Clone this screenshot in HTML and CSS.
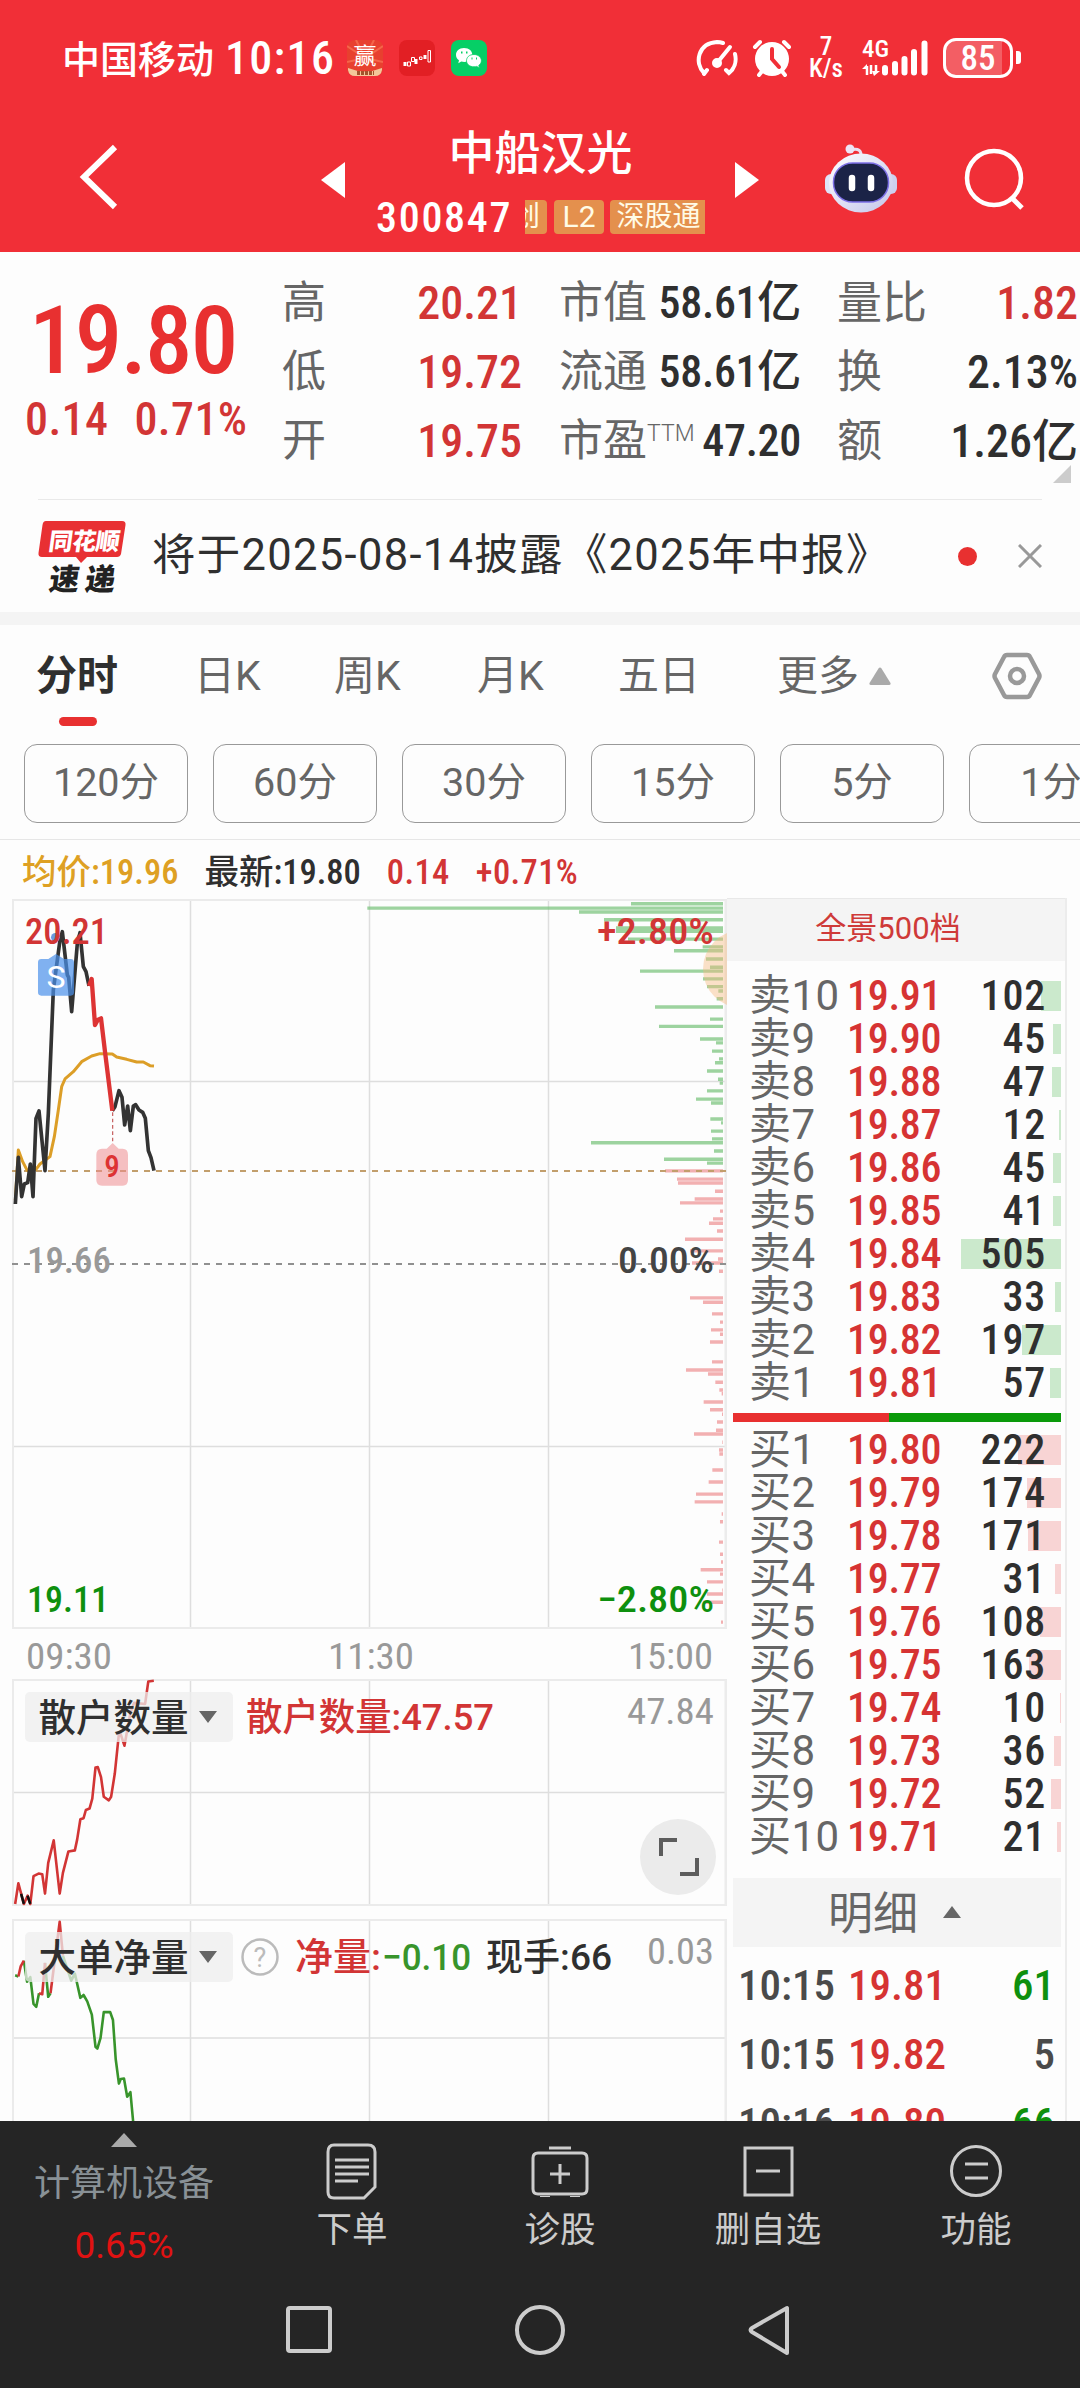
FILE: index.html
```html
<!DOCTYPE html>
<html lang="zh-CN">
<head>
<meta charset="utf-8">
<title>中船汉光 300847</title>
<link rel="stylesheet" href="styles.css">
</head>
<body>
<div class="app">
  <header class="top">
    <div class="status">
      <span class="carrier">中国移动</span>
      <span class="clock num">10:16</span>
      <svg class="app-icon" viewBox="0 0 36 36"><rect width="36" height="36" rx="8" fill="#e8402f"/><path d="M18 18 0 6M18 18 9 0M18 18 27 0M18 18 36 6M18 18 0 22M18 18 36 22" stroke="#f4654a" stroke-width="2"/><path d="M1 28Q18 35 35 28V30Q34 36 28 36H8Q2 36 1 30Z" fill="#f3c79a"/><path d="M10 33H27" stroke="#a3532c" stroke-width="4" stroke-dasharray="3 1"/><text x="18" y="24" text-anchor="middle" font-size="23" fill="#fff">赢</text></svg>
      <svg class="app-icon" viewBox="0 0 36 36"><rect width="36" height="36" rx="8" fill="#e21f24"/><path d="M6 22V26M17 19V24M26 15V19" stroke="#fff" stroke-width="3"/><path d="M8.500 22H11.500V26H8.500ZM12.500 17.500H15.500V21.500H12.500ZM20.500 17H23V19.500H20.500ZM29 10.500H31.500V22H29Z" fill="none" stroke="#fff" stroke-width="1"/></svg>
      <svg class="app-icon" viewBox="0 0 36 36"><rect width="36" height="36" rx="8" fill="#06cf66"/><path d="M13 8c-5 0-8 3-8 7 0 2 1 4 3 5.300l-.7 3 3-1.700c1 .3 2 .4 3 .4 5 0 8-3 8-7s-3-7-8.300-7Z" fill="#fff"/><path d="M23 14.500c-5 0-7.500 3-7.500 6.300s3 6 7.500 6c1 0 2-.2 2.700-.4l2.700 1.500-.6-2.600c1.600-1 2.600-2.700 2.600-4.500 0-3.300-3-6.300-7.400-6.300Z" fill="#fff" stroke="#06cf66" stroke-width=".8"/><path d="M10 12.500h1.500M15 12.500h1.500M20.500 18.500h1M25 18.500h1" stroke="#06cf66" stroke-width="2"/></svg>
      <div class="status-right">
        <svg width="42" height="38" viewBox="0 0 42 38" fill="none" stroke="#fff" stroke-width="4" stroke-linecap="round"><path d="M8 35 11 31M8 34C-2 24 2 4 21 3Q24 3 27 4M39 15C41 23 38 30 33 34L30 31"/><path d="M21 24 34 8" stroke-width="4"/><circle cx="21" cy="24" r="3" fill="#fff"/></svg>
        <svg class="alarm" width="40" height="38" viewBox="0 0 40 38"><circle cx="20" cy="20" r="17" fill="#fff"/><path d="M3 8 8 3M37 8 32 3M7 36 11 31M33 36 29 31" stroke="#fff" stroke-width="4" stroke-linecap="round"/><path d="M20 10V20L27 28" fill="none" stroke="#f12f37" stroke-width="4" stroke-linecap="round"/></svg>
        <div class="speed"><span>7</span><span>K/s</span></div>
        <svg class="signal" width="68" height="38" viewBox="0 0 68 38"><text class="svg-num" x="0" y="18" font-size="23" textLength="27" lengthAdjust="spacingAndGlyphs" fill="#fff">4G</text><path d="M5 36V27M9 26V35M14 26V34" stroke="#fff" stroke-width="2.500"/><path d="M0 30 5 25V30ZM10 32H18L12 37Z" fill="#fff"/><g stroke="#fff" stroke-width="6" stroke-linecap="round"><path d="M23 29V33.500M33 25V33.500M42.500 20V33.500M52 13V33.500M62.500 4.500V33.500"/></g></svg>
        <div class="battery"><span class="num">85</span></div>
      </div>
    </div>
    <nav class="title-bar">
      <svg class="back" width="40" height="66" viewBox="0 0 40 66"><path d="M36 3 5 33 36 63" fill="none" stroke="#fff" stroke-width="6"/></svg>
      <svg class="prev" width="24" height="36" viewBox="0 0 24 36"><path d="M0 18 24 0V36Z" fill="#fff"/></svg>
      <div class="title">
        <h1>中船汉光</h1>
        <div class="code-row"><span class="code num">300847</span><span class="tag cut"><i>创</i></span><span class="tag l2">L2</span><span class="tag link">深股通</span></div>
      </div>
      <svg class="next" width="24" height="36" viewBox="0 0 24 36"><path d="M24 18 0 0V36Z" fill="#fff"/></svg>
      <svg class="robot" width="74" height="70" viewBox="0 0 74 70">
        <defs><linearGradient id="shell" x1="0" y1="0" x2="1" y2="1"><stop offset="0" stop-color="#fff"/><stop offset="1" stop-color="#c3c5ea"/></linearGradient></defs>
        <path d="M27 7Q38 4 37 14" fill="none" stroke="#eadff2" stroke-width="3"/><circle cx="26" cy="6" r="4.500" fill="#eee4f5"/>
        <rect x="1" y="31" width="14" height="20" rx="6" fill="#dfe4f8"/><rect x="59" y="31" width="14" height="20" rx="6" fill="#cdd0ee"/>
        <ellipse cx="37" cy="40" rx="32" ry="29.500" fill="url(#shell)"/><rect x="9.500" y="20" width="55" height="39" rx="19" fill="#1b2347" stroke="#7c6fe6" stroke-width="1.500"/>
        <path d="M28 35V45M47 35V45" stroke="#fff" stroke-width="6.500" stroke-linecap="round"/>
      </svg>
      <svg class="search" width="62" height="64" viewBox="0 0 62 64" fill="none" stroke="#fff" stroke-width="4.500"><circle cx="30" cy="30" r="27"/><path d="M48 50 58 60" stroke-width="5"/></svg>
    </nav>
  </header>

  <section class="quote">
    <div class="last"><div class="price num">19.80</div><div class="change num"><span>0.14</span><span>0.71%</span></div></div>
    <dl class="c1"><div><dt>高</dt><dd class="num up">20.21</dd></div><div><dt>低</dt><dd class="num up">19.72</dd></div><div><dt>开</dt><dd class="num up">19.75</dd></div></dl>
    <dl class="c2"><div><dt>市值</dt><dd class="num">58.61亿</dd></div><div><dt>流通</dt><dd class="num">58.61亿</dd></div><div><dt class="pe">市盈<sup>TTM</sup></dt><dd class="num">47.20</dd></div></dl>
    <dl class="c3"><div><dt>量比</dt><dd class="num up">1.82</dd></div><div><dt>换</dt><dd class="num">2.13%</dd></div><div><dt>额</dt><dd class="num">1.26亿</dd></div></dl>
    <i class="corner"></i>
  </section>

  <section class="news">
    <svg width="90" height="74" viewBox="0 0 90 74"><path d="M8 2H84Q88 2 87.500 6L83 35Q82 38 79 38H49L43 44 38 38H4Q0 38 .5 34L4.500 6Q5 2 8 2Z" fill="#e83033"/><text class="logo" x="14" y="31" font-size="24" textLength="71" transform="skewX(-8)" fill="#fff">同花顺</text><text class="logo" x="20" y="71" font-size="30" textLength="66" transform="skewX(-8)" fill="#222">速递</text></svg>
    <p>将于2025-08-14披露《2025年中报》</p>
    <i class="dot"></i>
    <svg class="close" width="24" height="24" viewBox="0 0 24 24"><path d="M1 1 23 23M23 1 1 23" stroke="#999" stroke-width="3"/></svg>
  </section>

  <nav class="tabs">
    <a class="on">分时</a><a>日K</a><a>周K</a><a>月K</a><a>五日</a><a>更多<svg width="22" height="18" viewBox="0 0 22 18"><path d="M9.500 1.500Q11-.5 12.500 1.500L21.500 16Q22 18 20 18H2Q0 18 .5 16Z" fill="#aaa"/></svg></a>
    <svg class="gear" width="50" height="48" viewBox="0 0 50 48" fill="none" stroke="#999" stroke-width="4.500" stroke-linejoin="round"><path d="M15 3H35Q37 3 38 5L47 22Q48 24 47 26L38 43Q37 45 35 45H15Q13 45 12 43L3 26Q2 24 3 22L12 5Q13 3 15 3Z"/><circle cx="25" cy="24" r="7"/></svg>
  </nav>
  <div class="pills"><a>120分</a><a>60分</a><a>30分</a><a>15分</a><a>5分</a><a>1分</a></div>

  <div class="legend"><span class="avg">均价:19.96</span><span class="now">最新:19.80</span><span class="up">0.14</span><span class="up">+0.71%</span></div>

  <main class="board">
    <div class="charts">
      <svg class="chart" width="727" height="1228" viewBox="0 893 727 1228">
        <g fill="none" stroke="#dedede" stroke-width="1.500">
          <path d="M190.500 900V1628M369.500 900V1628M548.500 900V1628M13 1081.500H726M13 1446.500H726"/>
          <path d="M190.500 1680V1905M369.500 1680V1905M548.500 1680V1905M13 1792.500H726"/>
          <path d="M190.500 1920V2121M369.500 1920V2121M548.500 1920V2121M13 2038H726"/>
        </g>
        <g fill="none" stroke="#ebebeb" stroke-width="2"><path d="M13 900H726V1628H13ZM13 1680H726V1905H13ZM13 2121V1920H726V2121"/></g>
        <path d="M726 900V1628M726 1680V1905M726 1920V2121" stroke="#ececec" stroke-width="3"/>
        <g class="depth" transform="translate(360 880) scale(.33333 .48474)">
          <path class="ask" d="M1089 49H813M1089 58H22M1089 66H657M1089 82H732M1089 99H768M1089 106H768M1089 122H804M1089 138H1028M1089 146H942M1089 163H1038M1089 180H1050M1089 188H840M1089 204H1029M1089 220H1041M1089 229H1075M1089 245H1070M1089 262H885M1089 287H1050M1089 302H897M1089 328H1020M1089 336H1068M1089 353H1056M1089 369H1077M1089 377H1065M1089 394H1041M1089 411H1074M1089 419H1079M1089 435H1041M1089 452H1008M1089 460H1053M1089 493H1051M1089 501H1083M1089 518H1053M1089 534H1056M1089 542H693M1089 559H1062M1089 576H912M1089 584H1041"/>
          <path class="bid" d="M1089 600H915M1089 617H951M1089 625H954M1089 642H1065M1089 658H1004M1089 666H960M1089 683H1080M1089 699H1059M1089 708H1047M1089 724H1071M1089 741H975M1089 765H990M1089 782H1074M1089 790H996M1089 807H1077M1089 862H990M1089 871H1029M1089 895H1056M1089 912H1080M1089 928H1053M1089 937H1080M1089 953H1050M1089 994H1056M1089 1011H978M1089 1019H1044M1089 1036H1066M1089 1052H1078M1089 1060H1085M1089 1077H1031M1089 1093H1050M1089 1102H1086M1089 1118H1071M1089 1135H1068M1089 1143H1002M1089 1160H1087M1089 1176H1077M1089 1184H1078M1089 1217H1057M1089 1242H1046M1089 1267H1008M1089 1283H1004M1089 1308H1085M1089 1324H1080M1089 1366H1077M1089 1391H1080M1089 1407H1083M1089 1423H1022M1089 1432H1080M1089 1448H1041M1089 1465H1087M1089 1473H1041M1089 1490H1030M1089 1531H1083"/>
        </g>
        <circle cx="742" cy="969" r="39" fill="#f6b77c" fill-opacity=".42"/>
        <path d="M12 1171H726" stroke="#c29e6c" stroke-width="2" stroke-dasharray="6 6"/>
        <path d="M12 1264H726" stroke="#909090" stroke-width="2" stroke-dasharray="6 6"/>
        <g transform="translate(0 880) scale(.33333)" fill="none" stroke-width="9" stroke-linejoin="round">
          <path stroke="#dc9e27" d="M46 960 55 810 68 845 82 872 108 868 120 852 150 830 163 770 175 690 185 620 195 597 220 575 245 545 275 528 300 521 337 522 350 531 380 538 410 546 430 546 450 557 462 558"/>
          <path stroke="#333" stroke-width="11" d="M46 972 55 832 65 950 73 912 83 908 91 852 99 950 108 715 117 693 135 872 145 700 160 330 180 180 187 155 202 285 206 292 215 395 232 190 240 158 250 260 258 275 267 318"/>
          <path stroke="#333" stroke-width="11" d="M337 692 345 680 357 632 366 652 374 735 383 678 391 752 400 678 407 674 417 690 428 697 436 715 445 812 453 833 462 872"/>
          <path stroke="#dd3434" stroke-width="13" d="M267 318 275 297 285 435 293 420 303 415 315 515 337 692"/>
          <path d="M338 697V790" stroke="#c45a5a" stroke-width="3.500" stroke-dasharray="11 8"/>
          <circle cx="166" cy="172" r="13" fill="#6b9ae0"/>
          <path fill="#4a90ea" fill-opacity=".7" d="M145 237 168 222 192 237H212Q222 237 222 247V337Q222 347 212 347H124Q114 347 114 337V247Q114 237 124 237Z"/>
          <path fill="#ee8d8f" fill-opacity=".55" d="M320 806 338 789 356 806H368Q384 806 384 824V900Q384 917 368 917H306Q289 917 289 900V824Q289 806 306 806Z"/>
        </g>
        <g class="svg-num" font-size="36.500">
          <text class="badge-s" x="56" y="988" text-anchor="middle" font-size="32" fill="#fff">S</text>
          <text x="112" y="1177" text-anchor="middle" font-size="31" fill="#d33">9</text>
          <text x="25" y="944" textLength="83" lengthAdjust="spacingAndGlyphs" fill="#d23535">20.21</text>
          <text x="27" y="1273" textLength="84" lengthAdjust="spacingAndGlyphs" fill="#999">19.66</text>
          <text x="27" y="1612" textLength="82" lengthAdjust="spacingAndGlyphs" fill="#0e900e">19.11</text>
          <text x="597" y="944" textLength="117" lengthAdjust="spacingAndGlyphs" fill="#d23535">+2.80%</text>
          <text x="618" y="1273" textLength="96" lengthAdjust="spacingAndGlyphs" fill="#444">0.00%</text>
          <text x="597" y="1612" textLength="117" lengthAdjust="spacingAndGlyphs" fill="#0e900e">−2.80%</text>
          <g class="axis" fill="#999"><text x="26" y="1669" textLength="86" lengthAdjust="spacingAndGlyphs">09:30</text><text x="328" y="1669" textLength="86" lengthAdjust="spacingAndGlyphs">11:30</text><text x="628" y="1669" textLength="85" lengthAdjust="spacingAndGlyphs">15:00</text>
          <text x="627" y="1724" textLength="87" lengthAdjust="spacingAndGlyphs">47.84</text><text x="647" y="1964" textLength="67" lengthAdjust="spacingAndGlyphs">0.03</text></g>
        </g>
        <g transform="translate(0 1570) scale(.45918 .35714)" fill="none" stroke-linejoin="round">
          <path class="thin" stroke="#d23535" d="M33 935 40 877 52 935 60 912 66 935 73 857 84 850 92 852 98 906 105 820 117 757 130 906 137 848 149 788 163 785 168 755 175 698 182 695 187 672 195 668 201 640 208 553 213 552 220 580 226 635 237 645 242 635 250 570 259 458 263 460 271 492 284 400 292 372 316 375 323 312 335 310"/>
          <path class="thin" stroke="#111" d="M46 907 52 935M60 912 66 935"/>
          <path class="thin" stroke="#38942b" d="M33 1135 40 1138M52 1094 59 1153 66 1140 73 1215 79 1223 85 1185M98 1100 105 1195 110 1185M137 1080 155 1150 163 1130 175 1198 182 1190 190 1208 200 1245 208 1335 212 1340 219 1310 226 1238 240 1238 246 1260 252 1370 259 1438 263 1425 270 1424 277 1475 284 1462 290 1545"/>
          <path class="thin" stroke="#d23535" d="M40 1138 45 1110 52 1094M85 1185 92 1188 98 1100M110 1185 130 985 137 1080"/>
        </g>
        <g class="svg-cjk" font-size="37.500">
          <rect x="25" y="1692" width="208" height="50" rx="5" fill="#ededed" fill-opacity=".75"/><rect x="25" y="1932" width="208" height="50" rx="5" fill="#ededed" fill-opacity=".75"/>
          <text x="38.500" y="1731" fill="#2f2f2f">散户数量</text><text x="38.500" y="1971" fill="#2f2f2f">大单净量</text>
          <path d="M199 1711H217L208 1723ZM199 1951H217L208 1963Z" fill="#666"/>
          <text x="246" y="1730" textLength="248" lengthAdjust="spacingAndGlyphs" fill="#d23535">散户数量:47.57</text>
          <text x="295" y="1970" textLength="86" lengthAdjust="spacingAndGlyphs" fill="#d23535">净量:</text><text x="382" y="1970" textLength="89" lengthAdjust="spacingAndGlyphs" fill="#38942b">−0.10</text>
          <text x="486" y="1970" textLength="126" lengthAdjust="spacingAndGlyphs" fill="#2f2f2f">现手:66</text>
          <circle cx="260" cy="1957" r="17.500" fill="none" stroke="#bbb" stroke-width="2.500"/><text x="260" y="1967" text-anchor="middle" font-size="27" fill="#bbb" font-weight="400">?</text>
        </g>
        <circle cx="678" cy="1857" r="38" fill="#ebebeb"/><path d="M661 1856V1840H677M697 1858V1874H680" fill="none" stroke="#5c5c5c" stroke-width="4"/>
      </svg>
    </div>

    <aside class="book">
      <div class="book-head">全景500档</div>
      <ul class="levels ask">
        <li><b>卖10</b><em>19.91</em><span>102</span><i style="width:20px"></i></li>
        <li><b>卖9</b><em>19.90</em><span>45</span><i style="width:8px"></i></li>
        <li><b>卖8</b><em>19.88</em><span>47</span><i style="width:9px"></i></li>
        <li><b>卖7</b><em>19.87</em><span>12</span><i style="width:2px"></i></li>
        <li><b>卖6</b><em>19.86</em><span>45</span><i style="width:8px"></i></li>
        <li><b>卖5</b><em>19.85</em><span>41</span><i style="width:8px"></i></li>
        <li><b>卖4</b><em>19.84</em><span>505</span><i style="width:100px"></i></li>
        <li><b>卖3</b><em>19.83</em><span>33</span><i style="width:6px"></i></li>
        <li><b>卖2</b><em>19.82</em><span>197</span><i style="width:39px"></i></li>
        <li><b>卖1</b><em>19.81</em><span>57</span><i style="width:11px"></i></li>
      </ul>
      <div class="ratio"></div>
      <ul class="levels bid">
        <li><b>买1</b><em>19.80</em><span>222</span><i style="width:43px"></i></li>
        <li><b>买2</b><em>19.79</em><span>174</span><i style="width:34px"></i></li>
        <li><b>买3</b><em>19.78</em><span>171</span><i style="width:33px"></i></li>
        <li><b>买4</b><em>19.77</em><span>31</span><i style="width:6px"></i></li>
        <li><b>买5</b><em>19.76</em><span>108</span><i style="width:21px"></i></li>
        <li><b>买6</b><em>19.75</em><span>163</span><i style="width:32px"></i></li>
        <li><b>买7</b><em>19.74</em><span>10</span><i style="width:1px"></i></li>
        <li><b>买8</b><em>19.73</em><span>36</span><i style="width:7px"></i></li>
        <li><b>买9</b><em>19.72</em><span>52</span><i style="width:10px"></i></li>
        <li><b>买10</b><em>19.71</em><span>21</span><i style="width:4px"></i></li>
      </ul>
      <div class="detail-head"><span>明细</span><svg width="18" height="12" viewBox="0 0 18 12"><path d="M0 12 9 0 18 12Z" fill="#666"/></svg></div>
      <ul class="ticks">
        <li><b>10:15</b><em>19.81</em><span class="down">61</span></li>
        <li><b>10:15</b><em>19.82</em><span>5</span></li>
        <li><b>10:16</b><em>19.80</em><span class="down">66</span></li>
      </ul>
    </aside>
  </main>

  <footer class="bottom">
    <div class="actions">
      <a class="sector"><svg width="26" height="14" viewBox="0 0 26 14"><path d="M0 14 13 0 26 14Z" fill="#aaa"/></svg><span>计算机设备</span><span class="pct">0.65%</span></a>
      <a><svg width="60" height="58" viewBox="0 0 60 58"><path d="M12 2H46Q53 2 53 9V44L42 55H12Q6 55 6 49V9Q6 2 12 2Z"/><path d="M13 17H47M13 24H47M13 31H47M13 38H36"/></svg><span>下单</span></a>
      <a><svg width="60" height="58" viewBox="0 0 60 58"><path d="M19 5H41M8 10H52Q57 10 57 15V46Q57 51 52 51H8Q3 51 3 46V15Q3 10 8 10Z"/><path d="M30 21V41M20 31H40"/><path d="M15 53V54M45 53V54" stroke-width="10"/></svg><span>诊股</span></a>
      <a><svg width="60" height="58" viewBox="0 0 60 58"><path d="M7 5H54V52H7ZM18 28H42"/></svg><span>删自选</span></a>
      <a><svg width="60" height="58" viewBox="0 0 60 58"><circle cx="30" cy="28" r="24.500"/><path d="M19 21H42M19 35H42"/></svg><span>功能</span></a>
    </div>
    <div class="system">
      <svg width="50" height="54" viewBox="0 0 50 54"><rect x="4" y="5" width="42" height="43" rx="2"/></svg>
      <svg width="54" height="54" viewBox="0 0 54 54"><circle cx="27" cy="27" r="23"/></svg>
      <svg width="46" height="54" viewBox="0 0 46 54"><path d="M41 5V50L6 29Q3 27 6 25Z"/></svg>
    </div>
  </footer>
</div>
</body>
</html>
```
FILE: styles.css
```css
* { box-sizing: border-box; }
body, h1, p, dl, dd, ul { margin: 0; padding: 0; }
ul { list-style: none; }
i, em { font-style: normal; }
body { background: #fff; overflow: hidden; }
svg { display: block; flex: none; }
.app { width: 1080px; height: 2388px; overflow: hidden; display: flex; flex-direction: column; background: #fdfdfd; color: #2f2f2f; font-family: Roboto, "Noto Sans CJK SC", sans-serif; }
.num, .svg-num { font-family: Roboto, "Noto Sans CJK SC", sans-serif; font-weight: 500; font-stretch: 85%; white-space: nowrap; }
.svg-cjk { font-family: Roboto, "Noto Sans CJK SC", sans-serif; font-weight: 500; }
.badge-s { font-weight: 400; font-stretch: 100%; }
.axis { font-weight: 450; }
.up { color: #d23535; }

.top { flex: none; height: 252px; background: #f12f37; color: #fff; }
.status { height: 116px; padding-left: 62px; display: flex; align-items: center; }
.carrier { width: 152px; padding-bottom: 4px; font-size: 38px; font-weight: 500; white-space: nowrap; }
.clock { width: 120px; margin-left: 11px; font-size: 46px; letter-spacing: 1.3px; }
.app-icon { width: 36px; height: 36px; margin: 0 16px 0 0; font-family: "Noto Sans CJK SC", sans-serif; }
.clock + .app-icon { margin-left: 2px; }
.status-right { margin-left: 193px; display: flex; align-items: center; }
.alarm { margin-left: 14px; }
.speed { width: 44px; margin-left: 12px; margin-right: 14px; display: flex; flex-direction: column; align-items: center; font-size: 25px; line-height: 22px; font-stretch: 85%; font-weight: 500; }
.battery { position: relative; width: 70px; height: 40px; margin-left: 13px; border: 3px solid #fff; border-radius: 13px; background: linear-gradient(90deg, #f35e64 56px, #f12f37 56px); text-align: center; font-size: 35px; line-height: 35px; }
.battery::after { content: ""; position: absolute; right: -11px; top: 10px; width: 5px; height: 13px; border-radius: 0 3px 3px 0; background: #fff; }
.title-bar { height: 136px; display: flex; align-items: flex-start; padding-left: 79px; }
.back { margin-top: 28px; }
.prev { margin: 46px 0 0 202px; }
.title { width: 330px; margin-left: 31px; }
.title h1 { margin-left: -1px; padding-top: 3px; font-size: 46px; line-height: 68px; font-weight: 500; text-align: center; }
.code-row { display: flex; align-items: center; height: 60px; }
.code { width: 149px; font-size: 42px; letter-spacing: 1.7px; }
.tag { height: 34px; border-radius: 4px; background: #e4904d; color: #fffbe6; font-size: 28px; line-height: 34px; text-align: center; }
.tag.cut { width: 22px; overflow: hidden; display: flex; justify-content: flex-end; padding-right: 7px; border-radius: 0 4px 4px 0; }
.tag.l2 { width: 50px; margin-left: 7px; font-size: 30px; font-stretch: 90%; }
.tag.link { width: 95px; margin-left: 6px; padding-left: 2px; border-radius: 4px 0 0 4px; white-space: nowrap; }
.next { margin: 46px 0 0 29px; }
.robot { margin: 27px 0 0 65px; }
.search { margin: 32px 0 0 66px; }

.quote { position: relative; flex: none; height: 247px; display: flex; padding-top: 17px; }
.last { width: 282px; color: #e83030; }
.price { margin: 20px 0 0 29px; font-size: 95px; line-height: 103px; letter-spacing: -1.8px; }
.change { display: flex; gap: 26px; margin: 0 0 0 25px; font-size: 46px; line-height: 55px; letter-spacing: .4px; color: #d23535; }
.quote dl > div { display: flex; justify-content: space-between; align-items: center; height: 69px; line-height: 69px; white-space: nowrap; }
.quote dt { color: #666; font-size: 44px; }
.quote dd.num { font-size: 46px; }
.c1 { width: 240px; }
.c2 { width: 242px; margin-left: 37px; }
.quote .c2 dd.num { font-size: 44px; letter-spacing: -.3px; }
.c3 { width: 241px; margin-left: 36px; }
.quote .c3 dt { font-size: 45px; }
.pe sup { font-size: 23px; line-height: 1; vertical-align: 15px; font-weight: 300; }
.corner { position: absolute; left: 1053px; top: 213px; border-left: 18px solid transparent; border-bottom: 18px solid #ccc; }

.news { flex: none; height: 113px; margin: 0 38px; border-top: 1px solid #e9e9e9; display: flex; align-items: center; }
.logo { font-family: "Noto Sans CJK SC", sans-serif; font-weight: 900; }
.news p { width: 806px; margin-left: 24px; font-size: 43.5px; line-height: 60px; letter-spacing: 1.3px; white-space: nowrap; }
.dot { width: 19px; height: 19px; border-radius: 50%; background: #e83030; }
.close { margin-left: 41px; }

.tabs { flex: none; height: 116px; border-top: 13px solid #f4f4f4; padding: 13px 0 0 36px; display: grid; grid-template-columns: 158px 140px 143px 141px 159px 215px 50px; color: #666; font-size: 41px; line-height: 76px; }
.tabs a { display: flex; align-items: center; gap: 10px; height: 76px; position: relative; }
.tabs .on { color: #2f2f2f; font-weight: 700; }
.tabs .on::after { content: ""; position: absolute; left: 23px; top: 79px; width: 38px; height: 9px; border-radius: 5px; background: #e83030; }
.gear { margin-top: 14px; }
.pills { flex: none; height: 112px; padding: 16px 0 0 24px; display: flex; gap: 25px; overflow: hidden; border-bottom: 1px solid #e6e6e6; }
.pills a { flex: none; width: 164px; height: 79px; border: 1px solid #999; border-radius: 13px; color: #666; font-size: 39.5px; line-height: 76px; text-align: center; }
.legend { flex: none; height: 53px; display: flex; gap: 26px; padding-left: 22px; font-size: 34.5px; line-height: 65px; font-weight: 500; font-stretch: 85%; white-space: nowrap; }
.legend .up { letter-spacing: .4px; }
.avg { color: #dea023; }

.board { flex: none; height: 1228px; display: flex; overflow: hidden; }
.charts { width: 727px; }
.depth path { vector-effect: non-scaling-stroke; stroke-width: 3.4; fill: none; }
.depth .ask { stroke: #7cc47f; stroke-opacity: .75; }
.depth .bid { stroke: #ec8f90; stroke-opacity: .7; }
.thin { vector-effect: non-scaling-stroke; stroke-width: 2.6; }
.book { width: 340px; margin-top: 5px; border-right: 2px solid #ececec; }
.book-head { height: 63px; background: #f4f4f4; border-top: 1px solid #e8e8e8; color: #cf3a38; font-size: 31px; line-height: 60px; text-align: center; padding-right: 16px; }
.levels { width: 334px; padding-top: 13px; }
.levels li { position: relative; height: 43px; display: grid; grid-template-columns: 98px 97px 102px; padding-left: 22px; line-height: 43px; white-space: nowrap; }
.levels b { font-size: 42px; font-weight: 400; letter-spacing: .5px; color: #666; }
.levels em, .levels span { font-size: 42px; font-weight: 500; font-stretch: 85%; }
.levels em { letter-spacing: -.3px; }
.levels em, .ticks em { color: #d63333; }
.levels span { text-align: right; z-index: 1; letter-spacing: .8px; }
.levels i { position: absolute; right: 0; top: 7px; height: 30px; background: #cbe9cc; }
.levels.bid i { background: #f8d4d4; }
.ratio { width: 328px; height: 9px; margin: 9px 0 0 6px; background: linear-gradient(90deg, #e83030 156px, #0a9a0a 156px); }
.levels.bid { padding-top: 6px; }
.detail-head { width: 328px; height: 69px; margin: 20px 0 0 6px; background: #f4f4f4; color: #666; font-size: 45px; display: flex; align-items: center; gap: 25px; padding-left: 95px; }
.detail-head span { line-height: 66px; padding-top: 4px; }
.detail-head svg { margin-bottom: 2px; }
.ticks { padding-top: 3px; }
.ticks li { display: grid; grid-template-columns: 110px 100px 107px; height: 69px; padding-left: 11px; font-size: 43px; line-height: 70px; font-weight: 500; font-stretch: 85%; }
.ticks b { font-weight: 500; color: #4a4a4a; }
.ticks span { text-align: right; color: #4a4a4a; }
.ticks .down { color: #0e900e; }

.bottom { flex: 1; background: #252525; color: #ccc; }
.actions { display: flex; height: 150px; padding-top: 22px; }
.actions a { width: 208px; display: flex; flex-direction: column; align-items: center; font-size: 35.5px; line-height: 44px; }
.actions a span { margin-top: 7px; }
.actions .sector { width: 248px; margin: -10px 0 0; color: #899196; font-size: 36px; }
.actions .sector span { margin-top: 15px; }
.actions .sector .pct { margin-top: 18px; color: #e01212; font-size: 37px; }
.actions svg:not([height="14"]), .system svg { fill: none; stroke: #ccc; stroke-width: 3; }
.system { display: flex; padding: 32px 0 0 284px; }
.system svg { stroke-width: 4; stroke-linejoin: round; }
.system svg:nth-child(2) { margin-left: 179px; }
.system svg:nth-child(3) { margin-left: 179px; }
```
